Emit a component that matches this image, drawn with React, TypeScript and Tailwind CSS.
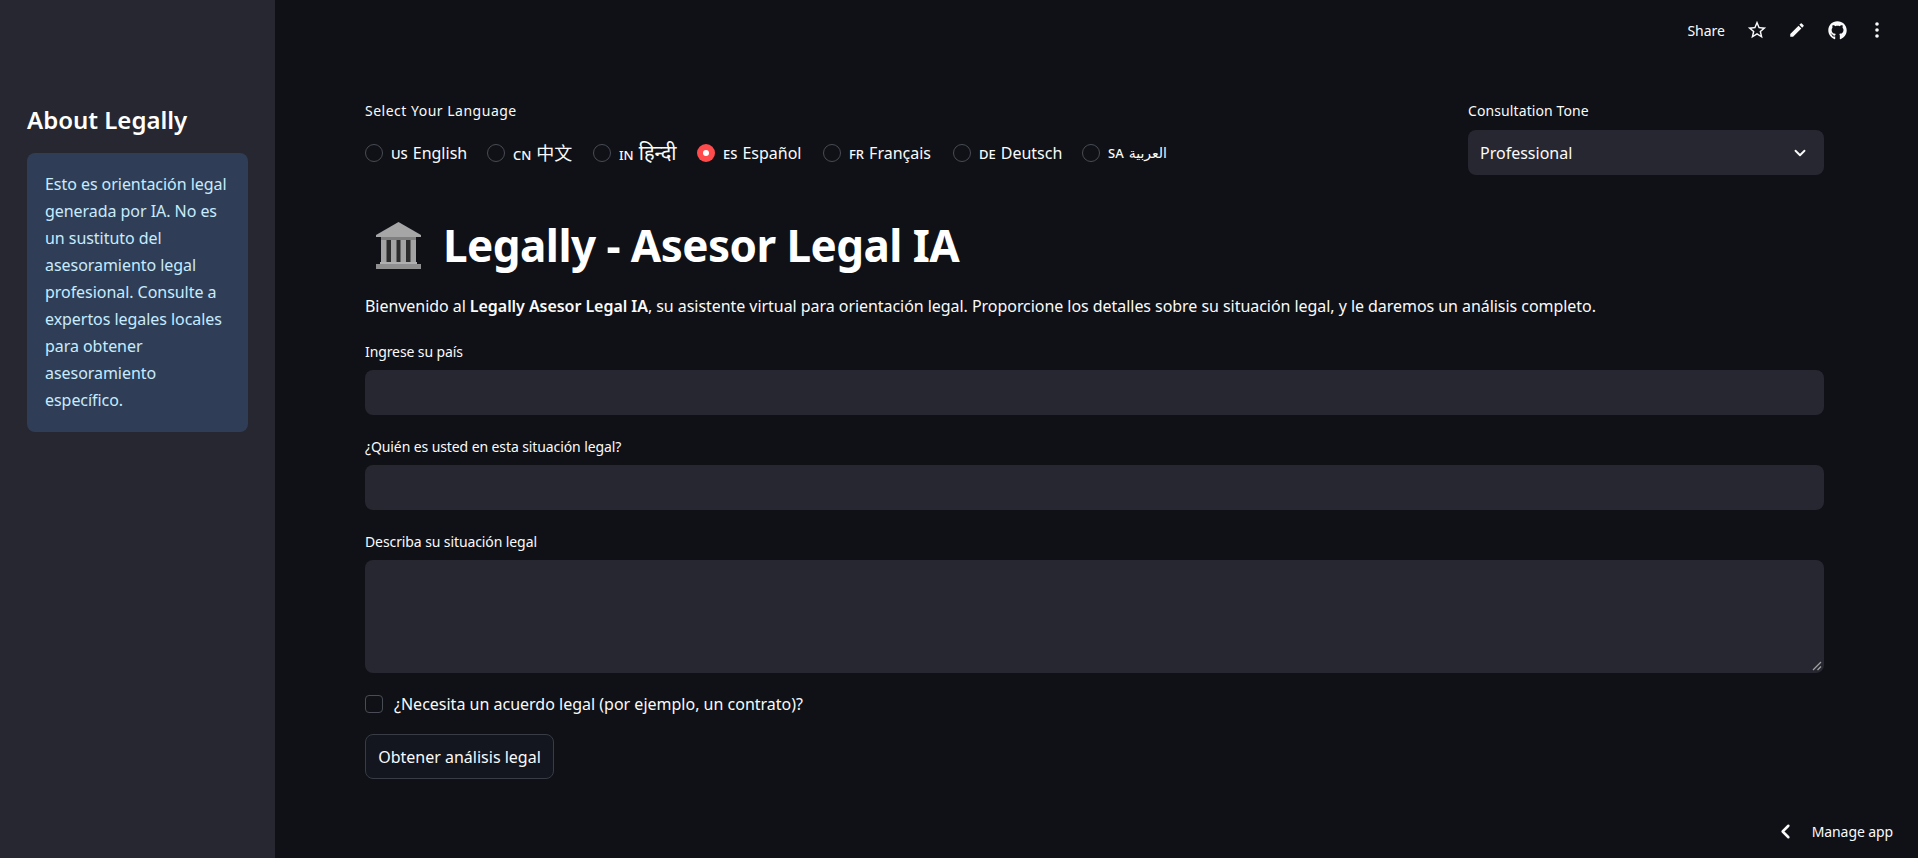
import { ChevronDown, ChevronLeft } from "lucide-react";
import { MdStarBorder, MdEdit } from "react-icons/md";
import { FaGithub } from "react-icons/fa";

const font = "font-['Noto_Sans','Noto_Sans_CJK_SC','DejaVu_Sans',sans-serif]";

const langs = [
  { code: "US", name: "English", w: "w-[122px]", n: "text-[16px]" },
  { code: "CN", name: "中文", w: "w-[106px]", n: "text-[18px]" },
  { code: "IN", name: "हिन्दी", w: "w-[104px]", n: "text-[20px] leading-[24px]" },
  { code: "ES", name: "Español", on: true, w: "w-[126px]", n: "text-[16px]" },
  { code: "FR", name: "Français", w: "w-[130px]", n: "text-[16px]" },
  { code: "DE", name: "Deutsch", w: "w-[129px]", n: "text-[16px]" },
  { code: "SA", name: "العربية", w: "", n: "text-[14px]" },
];

function Temple() {
  return (
    <svg width="45" height="47" viewBox="0 0 45 47" className="shrink-0">
      <path d="M22.5 0 L45 13 L45 15 L0 15 L0 13 Z" fill="#a6a6a6" />
      <rect x="5" y="15" width="35" height="3" fill="#7f7f7f" />
      <rect x="9" y="18" width="27" height="23" fill="#2b2b2b" />
      <rect x="5" y="18" width="5.5" height="23" fill="#a3a3a3" />
      <rect x="15" y="18" width="5.5" height="23" fill="#a3a3a3" />
      <rect x="24.5" y="18" width="5.5" height="23" fill="#a3a3a3" />
      <rect x="34.5" y="18" width="5.5" height="23" fill="#a3a3a3" />
      <rect x="4" y="40" width="37" height="2" fill="#b0b0b0" />
      <rect x="0" y="42" width="45" height="5" fill="#8f8f8f" />
    </svg>
  );
}

function Field({ label, tall }: { label: string; tall?: boolean }) {
  return (
    <div className="flex flex-col">
      <label className="text-[14px] leading-[20px] h-[20px] tracking-[-0.1px] text-[#fafafa] mb-[8px]">{label}</label>
      <div className={`relative bg-[#262730] rounded-lg ${tall ? "h-[113px]" : "h-[45px]"}`}>
        {tall && (
          <svg width="10" height="10" viewBox="0 0 10 10" className="absolute right-[2px] bottom-[2px]">
            <path d="M1 9 L9 1 M5.5 9 L9 5.5" stroke="#a0a0a0" strokeWidth="1.3" />
          </svg>
        )}
      </div>
    </div>
  );
}

export default function App() {
  return (
    <div className={`${font} flex h-[858px] w-full overflow-hidden bg-[#0f1117] text-[#fafafa]`}>
      <aside className="w-[275px] shrink-0 bg-[#262730] px-[27px] pt-[102px]">
        <h2 className="text-[24px] leading-[36px] font-semibold text-white mb-[15px]">About Legally</h2>
        <div className="bg-[#2f3e56] rounded-lg px-[18px] py-[18px] text-[16px] leading-[27px] tracking-[-0.05px] text-[#c7ebff]">
          Esto es orientación legal generada por IA. No es un sustituto del asesoramiento legal profesional. Consulte a expertos legales locales para obtener asesoramiento específico.
        </div>
      </aside>

      <main className="relative flex-1 min-w-0">
        <div className="flex justify-end items-center h-[60px] pr-[21px]">
          <span className="text-[14px] mr-[12px]">Share</span>
          <span className="w-[40px] flex justify-center"><MdStarBorder size={22} /></span>
          <span className="w-[40px] flex justify-center"><MdEdit size={18} /></span>
          <span className="w-[40px] flex justify-center"><FaGithub size={19} /></span>
          <span className="w-[40px] flex justify-center">
            <svg width="4" height="16" viewBox="0 0 4 16">
              <circle cx="2" cy="2" r="1.8" fill="#fafafa" />
              <circle cx="2" cy="8" r="1.8" fill="#fafafa" />
              <circle cx="2" cy="14" r="1.8" fill="#fafafa" />
            </svg>
          </span>
        </div>

        <div className="pl-[90px] pr-[94px] pt-[41px]">
          <div className="flex justify-between">
            <div>
              <div className="text-[14px] leading-[20px] mb-[16px] tracking-[0.5px]">Select Your Language</div>
              <div className="flex items-center h-[32px]">
                {langs.map((l) => (
                  <div key={l.code} className={`flex items-center ${l.w}`}>
                    {l.on ? (
                      <span className="w-[18px] h-[18px] rounded-full bg-[#ff4b4b] flex items-center justify-center mr-[8px]">
                        <span className="w-[6px] h-[6px] rounded-full bg-white" />
                      </span>
                    ) : (
                      <span className="w-[18px] h-[18px] rounded-full bg-[#0f1117] border border-[#4a4c55] mr-[8px]" />
                    )}
                    <span className="whitespace-nowrap flex items-baseline">
                      <span className="text-[13px] font-medium mr-[5px]">{l.code}</span>
                      <span className={l.n}>{l.name}</span>
                    </span>
                  </div>
                ))}
              </div>
            </div>
            <div className="w-[356px]">
              <div className="text-[14px] leading-[20px] mb-[9px] tracking-[0.1px]">Consultation Tone</div>
              <div className="h-[45px] rounded-lg bg-[#262730] flex items-center justify-between pl-[12px] pr-[15px]">
                <span className="text-[16px]">Professional</span>
                <ChevronDown size={18} strokeWidth={2.5} />
              </div>
            </div>
          </div>

          <div className="flex items-center h-[70px] mt-[35px] pl-[11px]">
            <Temple />
            <h1 className="text-[44px] leading-[70px] font-bold tracking-[-0.55px] text-white ml-[22px]">Legally - Asesor Legal IA</h1>
          </div>

          <p className="text-[16px] leading-[26px] mt-[13px] tracking-[-0.05px]">
            Bienvenido al <strong className="font-semibold">Legally Asesor Legal IA</strong>, su asistente virtual para orientación legal. Proporcione los detalles sobre su situación legal, y le daremos un análisis completo.
          </p>

          <div className="flex flex-col gap-[22px] mt-[23px]">
            <Field label="Ingrese su país" />
            <Field label="¿Quién es usted en esta situación legal?" />
            <Field label="Describa su situación legal" tall />
          </div>

          <div className="flex items-center mt-[21px] h-[20px]">
            <span className="w-[18px] h-[18px] rounded-[4px] border border-[#4a4c55] mr-[11px]" />
            <span className="text-[16px]">¿Necesita un acuerdo legal (por ejemplo, un contrato)?</span>
          </div>

          <button className="mt-[20px] h-[45px] w-[189px] rounded-lg border border-[#3a3c45] bg-[#13161f] text-[16px]">
            Obtener análisis legal
          </button>
        </div>

        <div className="absolute right-[25px] bottom-[15px] flex items-center text-[14px] tracking-[-0.1px]">
          <ChevronLeft size={23} strokeWidth={2.6} className="mr-[15px]" />
          <span>Manage app</span>
        </div>
      </main>
    </div>
  );
}
